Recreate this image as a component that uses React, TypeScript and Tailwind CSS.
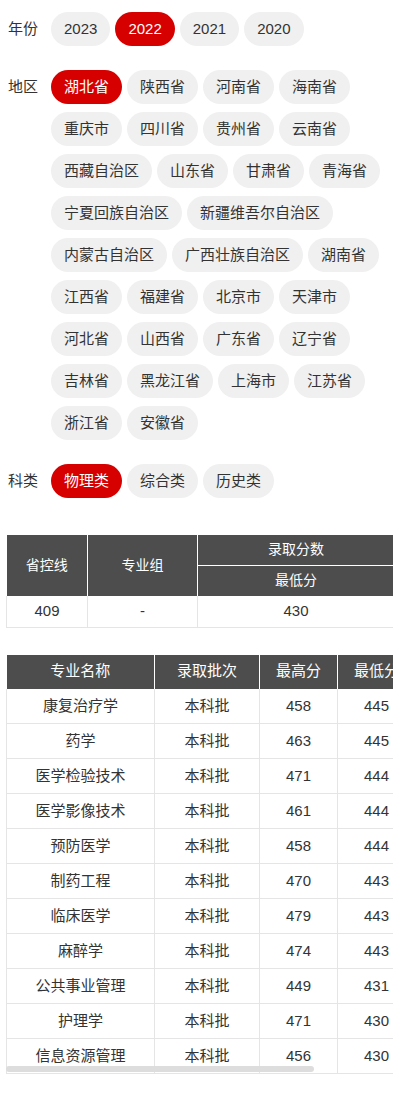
const years = ["2023", "2022", "2021", "2020"];
const regions = [
  "湖北省", "陕西省", "河南省", "海南省", "重庆市", "四川省", "贵州省", "云南省",
  "西藏自治区", "山东省", "甘肃省", "青海省", "宁夏回族自治区", "新疆维吾尔自治区",
  "内蒙古自治区", "广西壮族自治区", "湖南省", "江西省", "福建省", "北京市", "天津市",
  "河北省", "山西省", "广东省", "辽宁省", "吉林省", "黑龙江省", "上海市", "江苏省",
  "浙江省", "安徽省",
];
const subjects = ["物理类", "综合类", "历史类"];

const majors = [
  ["康复治疗学", "本科批", "458", "445", "-"],
  ["药学", "本科批", "463", "445", "-"],
  ["医学检验技术", "本科批", "471", "444", "-"],
  ["医学影像技术", "本科批", "461", "444", "-"],
  ["预防医学", "本科批", "458", "444", "-"],
  ["制药工程", "本科批", "470", "443", "-"],
  ["临床医学", "本科批", "479", "443", "-"],
  ["麻醉学", "本科批", "474", "443", "-"],
  ["公共事业管理", "本科批", "449", "431", "-"],
  ["护理学", "本科批", "471", "430", "-"],
  ["信息资源管理", "本科批", "456", "430", "-"],
];

function Chip({ label, active }: { label: string; active?: boolean }) {
  return (
    <span
      className={
        active
          ? "h-[34px] px-[13px] rounded-full text-[15px] leading-[34px] bg-[#d70000] text-white whitespace-nowrap"
          : "h-[34px] px-[13px] rounded-full text-[15px] leading-[34px] bg-[#f0f0f0] text-[#333] whitespace-nowrap"
      }
    >
      {label}
    </span>
  );
}

function FilterRow({ title, items, active, className }: { title: string; items: string[]; active: string; className?: string }) {
  return (
    <div className={"flex " + (className || "")}>
      <div className="w-[43px] shrink-0 text-[15px] leading-[34px] text-[#333]">{title}</div>
      <div className="flex flex-wrap gap-x-[5px] gap-y-[8px] w-[400px] max-w-[390px]">
        {items.map((it) => (
          <Chip key={it} label={it} active={it === active} />
        ))}
      </div>
    </div>
  );
}

export default function App() {
  return (
    <div
      className="w-[400px] min-h-[1100px] bg-white overflow-hidden text-[#333]"
      style={{ fontFamily: '"Liberation Sans", "Noto Sans CJK SC", sans-serif' }}
    >
      <div className="pt-[12px] pl-[8px]">
        <FilterRow title="年份" items={years} active="2022" />
        <FilterRow title="地区" items={regions} active="湖北省" className="mt-[24px] w-[386px]" />
        <FilterRow title="科类" items={subjects} active="物理类" className="mt-[24px]" />
      </div>

      {/* province line table */}
      <div className="ml-[6px] w-[387px] mt-[37px] overflow-hidden">
        <table className="w-[388px] border-collapse table-fixed text-center">
          <colgroup>
            <col className="w-[81px]" />
            <col className="w-[110px]" />
            <col />
          </colgroup>
          <thead className="bg-[#4d4d4d] text-white text-[14px] font-normal">
            <tr className="h-[30px]">
              <th rowSpan={2} className="font-normal border-r border-white">省控线</th>
              <th rowSpan={2} className="font-normal border-r border-white">专业组</th>
              <th className="font-normal border-b border-white">录取分数</th>
            </tr>
            <tr className="h-[31px]">
              <th className="font-normal">最低分</th>
            </tr>
          </thead>
          <tbody className="text-[15px]">
            <tr className="h-[31px] border-b border-[#e5e5e5]">
              <td className="border-l border-r border-[#e5e5e5]">409</td>
              <td className="border-r border-[#e5e5e5]">-</td>
              <td>430</td>
            </tr>
          </tbody>
        </table>
      </div>

      {/* major score table */}
      <div className="relative ml-[6px] w-[387px] mt-[27px] overflow-hidden">
        <table className="w-[489px] border-collapse table-fixed text-center">
          <colgroup>
            <col className="w-[148px]" />
            <col className="w-[105px]" />
            <col className="w-[78px]" />
            <col className="w-[78px]" />
            <col className="w-[80px]" />
          </colgroup>
          <thead className="bg-[#4d4d4d] text-white text-[15px]">
            <tr className="h-[34px]">
              <th className="font-normal border-r border-white">专业名称</th>
              <th className="font-normal border-r border-white">录取批次</th>
              <th className="font-normal border-r border-white">最高分</th>
              <th className="font-normal border-r border-white">最低分</th>
              <th className="font-normal">最低位次</th>
            </tr>
          </thead>
          <tbody className="text-[15px]">
            {majors.map((m) => (
              <tr key={m[0]} className="h-[35px] border-b border-[#e5e5e5]">
                <td className="border-l border-r border-[#e5e5e5]">{m[0]}</td>
                <td className="border-r border-[#e5e5e5]">{m[1]}</td>
                <td className="border-r border-[#e5e5e5]">{m[2]}</td>
                <td className="border-r border-[#e5e5e5]">{m[3]}</td>
                <td className="border-r border-[#e5e5e5]">{m[4]}</td>
              </tr>
            ))}
          </tbody>
        </table>
        {/* scroll thumb */}
        <div className="absolute left-0 bottom-[2px] w-[308px] h-[6px] rounded-full bg-[#dddddd]" />
      </div>
    </div>
  );
}
